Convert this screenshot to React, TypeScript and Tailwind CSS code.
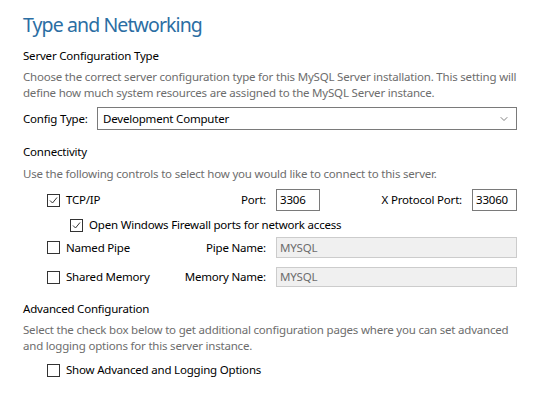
import { ChevronDown } from 'lucide-react';

const font = { fontFamily: '"Noto Sans", "Liberation Sans", sans-serif' };

const CheckBox = ({ checked, label }: { checked?: boolean; label: string }) => (
  <label className="flex items-center gap-[6px] text-[11.5px] leading-[16px] tracking-[-0.2px] text-black">
    <span className="flex h-[13px] w-[13px] shrink-0 items-center justify-center border border-[#333] bg-white">
      {checked && (
        <svg width="9" height="9" viewBox="0 0 9 9" fill="none">
          <path d="M1 4.5 L3.5 7 L8 1.5" stroke="#333" strokeWidth="1" />
        </svg>
      )}
    </span>
    <span>{label}</span>
  </label>
);

const Field = ({ value, disabled, className }: { value: string; disabled?: boolean; className: string }) => (
  <div
    className={`flex items-center border px-[3px] text-[11.5px] tracking-[-0.2px] ${
      disabled ? 'border-[#ccc] bg-[#f0f0f0] text-[#6d6d6d]' : 'border-[#7a7a7a] bg-white text-black'
    } ${className}`}
  >
    {value}
  </div>
);

const App = () => {
  return (
    <div
      className="h-[408px] w-[536px] bg-white pl-[23px] pr-[19px] pt-[11px] text-[11.5px] tracking-[-0.2px]"
      style={font}
    >
      <h1 className="text-[19.5px] leading-[28px] tracking-[-0.9px] text-[#2b6ea3]">Type and Networking</h1>

      {/* Server Configuration Type */}
      <h2 className="mt-[9px] leading-[16px] text-black">Server Configuration Type</h2>
      <p className="mt-[5px] leading-[16px] text-[#6d6d6d]">
        Choose the correct server configuration type for this MySQL Server installation. This setting will define how
        much system resources are assigned to the MySQL Server instance.
      </p>
      <div className="mt-[6px] flex items-center">
        <span className="w-[74px] text-black">Config Type:</span>
        <div className="flex h-[23px] flex-1 items-center justify-between border border-[#7a7a7a] pl-[5px] pr-[6px] text-black">
          <span>Development Computer</span>
          <ChevronDown className="h-[12px] w-[12px] text-[#555]" strokeWidth={1.5} />
        </div>
      </div>

      {/* Connectivity */}
      <h2 className="mt-[14px] leading-[16px] text-black">Connectivity</h2>
      <p className="mt-[6px] leading-[16px] text-[#6d6d6d]">
        Use the following controls to select how you would like to connect to this server.
      </p>
      <div className="mt-[7px] flex h-[22px] items-center pl-[24px]">
        <div className="w-[120px]">
          <CheckBox checked label="TCP/IP" />
        </div>
        <span className="w-[99px] text-right text-black">Port:</span>
        <Field value="3306" className="ml-[10px] h-[22px] w-[44px]" />
        <span className="flex-1 pr-[10px] text-right text-black">X Protocol Port:</span>
        <Field value="33060" className="h-[22px] w-[45px]" />
      </div>
      <div className="mt-[6px] pl-[47px]">
        <CheckBox checked label="Open Windows Firewall ports for network access" />
      </div>
      <div className="mt-[4px] flex h-[21px] items-center pl-[24px]">
        <div className="w-[120px]">
          <CheckBox label="Named Pipe" />
        </div>
        <span className="w-[99px] text-right text-black">Pipe Name:</span>
        <Field value="MYSQL" disabled className="ml-[10px] h-[21px] flex-1" />
      </div>
      <div className="mt-[9px] flex h-[20px] items-center pl-[24px]">
        <div className="w-[120px]">
          <CheckBox label="Shared Memory" />
        </div>
        <span className="w-[99px] text-right text-black">Memory Name:</span>
        <Field value="MYSQL" disabled className="ml-[10px] h-[20px] flex-1" />
      </div>

      {/* Advanced Configuration */}
      <h2 className="mt-[14px] leading-[16px] text-black">Advanced Configuration</h2>
      <p className="mt-[5px] leading-[16px] text-[#6d6d6d]">
        Select the check box below to get additional configuration pages where you can set advanced and logging options
        for this server instance.
      </p>
      <div className="mt-[8px] pl-[24px]">
        <CheckBox label="Show Advanced and Logging Options" />
      </div>
    </div>
  );
};

export default App;
